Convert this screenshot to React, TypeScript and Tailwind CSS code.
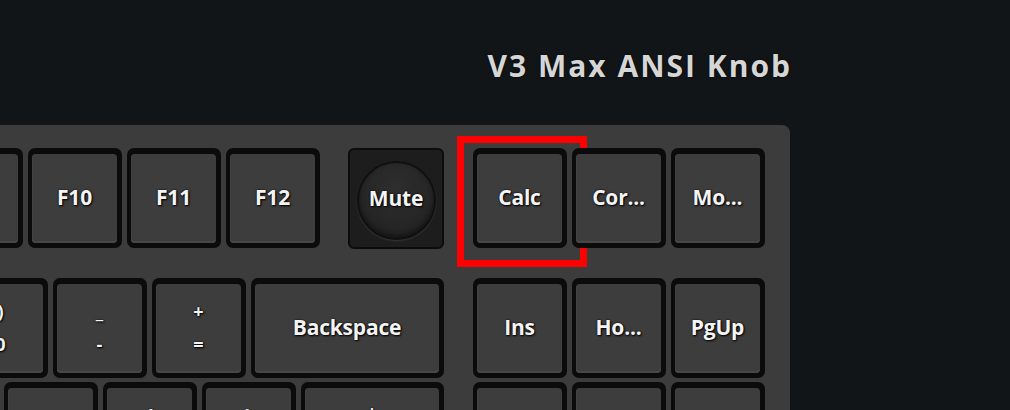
import React from "react";

const font = "font-['Open_Sans','Noto_Sans',sans-serif]";

function Key({
  w = "w-[94px]",
  label,
  top,
  bottom,
  children,
}: {
  w?: string;
  label?: string;
  top?: string;
  bottom?: string;
  children?: React.ReactNode;
}) {
  return (
    <div className={`relative ${w} h-[100px] shrink-0 rounded-[7px] bg-[#0b0b0b] pt-[6px] pl-[4px] pr-[5px] pb-[5px]`}>
      <div className="h-full w-full rounded-[4px] bg-[#3d3d3d] shadow-[inset_0_-2px_0_#474747,inset_1px_0_0_#424242] flex flex-col items-center justify-center text-[#f4f4f4] font-bold [text-shadow:1px_1px_2px_#000,0_0_2px_#000]">
        {label ? <span className="text-[21px] leading-none -mt-[2px] tracking-[-0.2px]">{label}</span> : null}
        {top !== undefined ? (
          <div className="flex flex-col items-center gap-[15px] text-[18px] leading-none -mt-[2px]">
            <span>{top}</span>
            <span>{bottom}</span>
          </div>
        ) : null}
      </div>
      {children}
    </div>
  );
}

function Knob() {
  return (
    <div className="w-[96px] h-[101px] shrink-0 rounded-[6px] bg-[#1d1d1d] border-2 border-[#0b0b0b] flex items-center justify-center pt-[3px]">
      <div className="w-[79px] h-[79px] rounded-full border-2 border-[#101010] bg-[radial-gradient(circle_at_50%_35%,#2e2e2e_0%,#262626_55%,#1e1e1e_100%)] shadow-[0_1px_2px_#3a3a3a,inset_0_-3px_4px_#151515] flex items-center justify-center">
        <span className="text-[21px] leading-none font-bold text-[#f4f4f4] -mt-[3px] tracking-[-0.2px] [text-shadow:1px_1px_2px_#000,0_0_2px_#000]">Mute</span>
      </div>
    </div>
  );
}

export default function App() {
  return (
    <div className={`w-[1010px] h-[410px] overflow-hidden bg-[#121517] ${font}`}>
      <div className="w-[792px] flex justify-end pt-[51px]">
        <div className="text-[30px] leading-[29px] font-bold text-[#d6d6d6] tracking-[2px] [text-shadow:0_0_2px_#000]">
          V3 Max ANSI Knob
        </div>
      </div>
      <div className="mt-[45px] ml-[-400px] w-[1190px] rounded-[8px] bg-[#3c3c3c] pt-[23px] pr-[25px] pb-[40px] flex flex-col items-end">
        {/* F row */}
        <div className="flex gap-[29px]">
          <div className="flex gap-[28px]">
            <div className="flex gap-[5px]">
              <Key label="F8" />
              <Key label="F9" />
              <Key label="F10" />
              <Key label="F11" />
              <Key label="F12" />
            </div>
            <Knob />
          </div>
          <div className="flex gap-[5px]">
            <Key label="Calc">
              <div className="absolute left-[-16px] top-[-12px] w-[130px] h-[131px] border-[7px] border-[#ff0000]" />
            </Key>
            <Key label="Cor..." />
            <Key label="Mo..." />
          </div>
        </div>
        {/* number row */}
        <div className="flex gap-[29px] mt-[29px]">
          <div className="flex gap-[5px]">
            <Key top="*" bottom="8" />
            <Key top="(" bottom="9" />
            <Key top=")" bottom="0" />
            <Key top="_" bottom="-" />
            <Key top="+" bottom="=" />
            <Key w="w-[193px]" label="Backspace" />
          </div>
          <div className="flex gap-[5px]">
            <Key label="Ins" />
            <Key label="Ho..." />
            <Key label="PgUp" />
          </div>
        </div>
        {/* tab row */}
        <div className="flex gap-[29px] mt-[4px]">
          <div className="flex gap-[5px]">
            <Key label="I" />
            <Key label="O" />
            <Key label="P" />
            <Key top="{" bottom="[" />
            <Key top="}" bottom="]" />
            <Key w="w-[143px]" top="|" bottom="\" />
          </div>
          <div className="flex gap-[5px]">
            <Key label="Del" />
            <Key label="End" />
            <Key label="PgDn" />
          </div>
        </div>
      </div>
    </div>
  );
}
